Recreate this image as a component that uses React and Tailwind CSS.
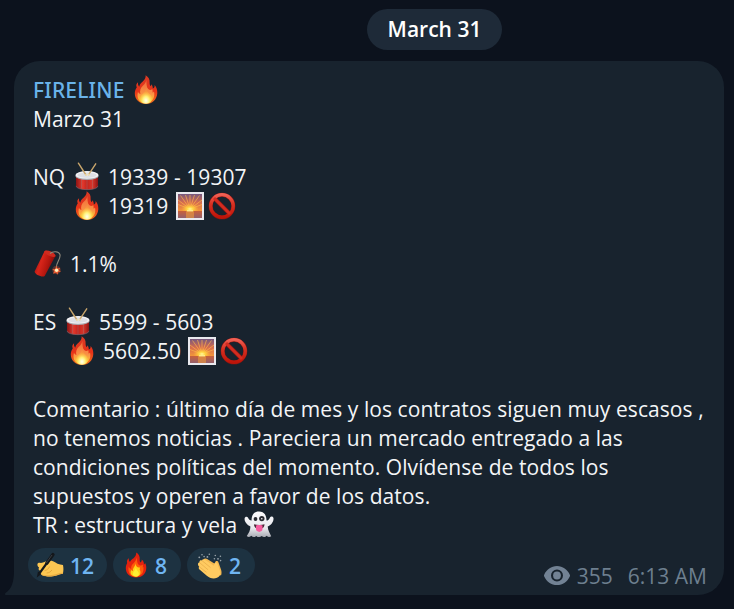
import React from "react";

function Fire({ className = "" }) {
  return (
    <svg viewBox="0 0 24 29" className={`h-[29px] w-6 shrink-0 ${className}`}>
      <defs>
        <linearGradient id="fireOuter" x1="0" y1="0" x2="0" y2="1">
          <stop offset="0" stopColor="#d93a25" />
          <stop offset="0.55" stopColor="#e63218" />
          <stop offset="1" stopColor="#f3751f" />
        </linearGradient>
        <linearGradient id="fireMid" x1="0" y1="0" x2="0" y2="1">
          <stop offset="0" stopColor="#f0683a" />
          <stop offset="0.6" stopColor="#f99245" />
          <stop offset="1" stopColor="#fcd02f" />
        </linearGradient>
        <radialGradient id="fireCore" cx="0.5" cy="0.8" r="0.6">
          <stop offset="0" stopColor="#fffef0" />
          <stop offset="0.45" stopColor="#fff27a" />
          <stop offset="1" stopColor="#fdc52f" stopOpacity="0.2" />
        </radialGradient>
      </defs>
      <path fill="url(#fireOuter)" d="M11.6.3c2.9 1.700 4.300 4.200 4 7.200 0 1.500.2 2.600 1 3.700.6-.4.700-1 .6-1.900 1.500 1.400 1.600 2.900 1.600 4.300 1.500-.7 2-2 1.800-3.600 2 2.200 2.900 5.100 2.700 8.300-.4 6.300-5.100 10.700-11.300 10.700S.800 24.700.800 18.500c0-2.500.7-4.500 2-6.300C1.600 10.500 2.500 8.500 4.100 7.200c-.5 1.800.3 3.200 1.100 4.500C5.800 8.500 8.200 7.400 9.900 5.300 11 3.900 11.900 2.300 11.600.3Z" />
      <path fill="url(#fireMid)" d="M12.300 4.700c.4 3.500-.2 7 1.900 9.400 1.600 1.300 3.100 1.200 4-.1.500 1.300.5 2.400.3 3.500.7-.1 1.200-.5 1.500-1 1.300 5.300-1.200 11.600-8.100 11.600-6.900 0-9.600-5.300-7.900-11.400.6 1.300 1.400 2.100 2.400 2.300-.8-3.100 0-6 2.400-8.300 2-1.900 3.300-3.400 3.500-6Z" />
      <path fill="url(#fireCore)" d="M12.100 13.500c.3 3 3.700 4.800 5.200 7.200 2.100 4-.5 8-5.300 8-5.200 0-7.300-4.100-5.200-7.700 1.400-2.500 4.900-4 5.300-7.500Z" />
    </svg>
  );
}

function Drum({ className = "" }) {
  return (
    <svg viewBox="0 0 24 29" className={`h-[29px] w-6 shrink-0 ${className}`}>
      <defs>
        <linearGradient id="drumBody">
          <stop offset="0" stopColor="#8c1414" />
          <stop offset="0.3" stopColor="#e3392d" />
          <stop offset="0.5" stopColor="#c2231d" />
          <stop offset="0.75" stopColor="#d8362b" />
          <stop offset="1" stopColor="#8c1414" />
        </linearGradient>
      </defs>
      <path fill="url(#drumBody)" d="M1 13v11c1 5 21 5 22 0V13Z" />
      <path fill="none" stroke="#75606a" strokeWidth=".7" d="M1 23.900c.6 5 21.400 5 22 0" />
      <path stroke="#a86a68" strokeWidth=".5" d="M6.500 17v9.500M12 18v9.500M17.500 17v9.500" />
      <ellipse cx="12" cy="13.900" rx="11.700" ry="4.200" fill="#a9aab0" />
      <ellipse cx="12" cy="12.900" rx="11.500" ry="3.900" fill="#f1f1f4" />
      <ellipse cx="12" cy="13.200" rx="9.500" ry="2.700" fill="#dedfe5" />
      <path stroke="#c9a66c" strokeWidth="1.400" strokeLinecap="round" d="M3.400 1.200 11 13M20.700 1.800 13.600 12.700" />
      <circle cx="11.100" cy="13" r="1.100" fill="#f0dfb2" />
      <circle cx="13.700" cy="12.700" r="1.100" fill="#f0dfb2" />
    </svg>
  );
}

function Sunrise({ className = "" }) {
  return (
    <svg viewBox="0 0 28 28" className={`h-7 w-7 shrink-0 ${className}`}>
      <defs>
        <linearGradient id="sunSky" x1="0" y1="0" x2="0" y2="1">
          <stop offset="0" stopColor="#75587f" />
          <stop offset="0.5" stopColor="#d66b4e" />
          <stop offset="1" stopColor="#f3963a" />
        </linearGradient>
        <linearGradient id="sunSea" x1="0" y1="0" x2="0" y2="1">
          <stop offset="0" stopColor="#c9603a" />
          <stop offset="1" stopColor="#94606c" />
        </linearGradient>
        <radialGradient id="sunGlow">
          <stop offset="0" stopColor="#fff6a0" />
          <stop offset="0.35" stopColor="#ffd541" />
          <stop offset="1" stopColor="#ffad38" stopOpacity="0" />
        </radialGradient>
      </defs>
      <path fill="#e9e9ee" d="M0 0h28v28H0z" />
      <path fill="url(#sunSky)" d="M2 2h24v17H2z" />
      <path stroke="#ffb94b" strokeWidth="1" opacity=".65" d="M14 17 14 3M14 17 9.500 3M14 17 18.500 3M14 17 4.500 3.500M14 17 23.500 3.500M14 17 2 8M14 17 26 8M14 17 2 12.500M14 17 26 12.500" />
      <ellipse cx="14" cy="17" rx="9" ry="5.500" fill="url(#sunGlow)" />
      <path fill="url(#sunSea)" d="M2 19h24v7H2z" />
      <path fill="#e8963f" opacity=".65" d="M10 19h8v7h-8z" />
      <path stroke="#fff09a" strokeWidth="1.200" d="M11 18.800h6" />
    </svg>
  );
}

function Prohibited({ className = "" }) {
  return (
    <svg viewBox="0 0 28 28" className={`h-7 w-7 shrink-0 ${className}`}>
      <defs>
        <linearGradient id="banRed" x1="0" y1="0" x2="0" y2="1">
          <stop offset="0" stopColor="#f06054" />
          <stop offset="0.4" stopColor="#d83223" />
          <stop offset="1" stopColor="#bd1409" />
        </linearGradient>
      </defs>
      <circle cx="14" cy="14" r="11.300" fill="none" stroke="#8f1610" strokeWidth="4" />
      <path stroke="#8f1610" strokeWidth="4" d="m6 6 16 16" />
      <circle cx="14" cy="14" r="11.300" fill="none" stroke="url(#banRed)" strokeWidth="3.200" />
      <path stroke="#d32c20" strokeWidth="3" d="m6 6 16 16" />
    </svg>
  );
}

function Dynamite({ className = "" }) {
  return (
    <svg viewBox="0 0 29 29" className={`h-[29px] w-[29px] shrink-0 ${className}`}>
      <defs>
        <linearGradient id="stick" x1="0" y1="0.2" x2="1" y2="0.6">
          <stop offset="0" stopColor="#8f0e0b" />
          <stop offset="0.35" stopColor="#d8251a" />
          <stop offset="0.65" stopColor="#b5170f" />
          <stop offset="1" stopColor="#6d0807" />
        </linearGradient>
      </defs>
      <path fill="url(#stick)" d="M11.500 2.200 1.700 22.300c-.8 2.500 7.500 6.500 10 4.600L22.300 7.200C22.500 4.500 13.500.5 11.500 2.200Z" />
      <ellipse cx="17" cy="4.700" rx="6" ry="2.300" transform="rotate(24 17 4.700)" fill="#cf2b1f" />
      <path fill="none" stroke="#8f897b" strokeWidth="1.100" d="M17 4.500c2.700-2.600 9-2.500 10 1.200 1 3.600-4 8-3.700 13" />
      <circle cx="23.500" cy="21" r="4.300" fill="#d74f2b" opacity=".35" />
      <path fill="#e65c33" d="m23.500 17 1 2.500 2.700-.7-1.200 2.500 1.900 1.300-2.800.6-.4 2.500-1.700-2-3 1 1.200-2.700-1.900-1.700 2.800-.2Z" />
      <circle cx="23.600" cy="21.200" r="1.700" fill="#fff0bc" />
    </svg>
  );
}

function Ghost({ className = "" }) {
  return (
    <svg viewBox="0 0 30 27" className={`h-[27px] w-[30px] shrink-0 ${className}`}>
      <defs>
        <linearGradient id="ghostBody" x1="0" y1="0" x2="0" y2="1">
          <stop offset="0" stopColor="#fbfbfd" />
          <stop offset="0.65" stopColor="#e8e8ed" />
          <stop offset="1" stopColor="#a9abb3" />
        </linearGradient>
      </defs>
      <path fill="url(#ghostBody)" d="M15 .6c5.800 0 7.500 4.400 7.500 9 1.700-.1 2.700-1.100 3.500-3.200.8-1.500 3.300-1.100 3.500.9.300 3.600-2.500 7-5.800 8.200.2 3.900 2.200 6.600 3.500 9.700-1.700 1.300-3.300.8-4.500-.5-1.300 1.700-3.600 1.900-4.900.3-1.700 1.500-3.900 1.500-5.500-.1-1.600 1.600-3.700 1.500-4.900-.1-1.300 1.400-3.400 1.500-4.600.1 2-3 3.700-5.600 3.600-9.500C3.100 14 .300 10.700.600 7.500.8 5.600 3 5 3.900 6.500c.9 1.900 1.900 2.900 3.700 3.100 0-4.800 1.800-9 7.400-9Z" />
      <circle cx="11.500" cy="8" r="1.900" fill="#292a31" />
      <circle cx="17.800" cy="7.600" r="2.700" fill="#292a31" />
      <circle cx="17.800" cy="7.700" r=".8" fill="#f5f5f8" />
      <path fill="#4a2536" d="M10 13.300c3 1 7.500 1 10.500 0 0 3.200-2.200 4.700-5.200 4.700s-5.300-1.500-5.300-4.700Z" />
      <path fill="#f45c9e" d="M12 14.400c1.800-.4 4.700-.4 6.500 0v3.700c0 3.700-6.500 3.700-6.500 0Z" />
    </svg>
  );
}

function Writing({ className = "" }) {
  return (
    <svg viewBox="0 0 28 26" className={`h-[26px] w-7 shrink-0 ${className}`}>
      <path fill="#fdc752" d="M1.400 12.600C1.300 11 3 10.600 4.800 11c3.200-.3 5.200-2.200 8.400-2.400 2.800-.2 5.600 1.700 8.300 3.200 1.800.7 3.700.9 5.500 1.200.6 2.900.6 5.800-.1 8.800-4.300.3-7 2.600-11.800 2.600-4.500 0-8.900-.3-10.500-2.500-.9-1.200-.6-2.400.5-3.100-2.300-.2-3.200-1.700-2-3.300-1.100-.5-1.700-1.600-1.700-2.900Z" />
      <path fill="#e8ab42" d="M5.200 22.200c3.200 1.300 7.300 1.400 10.600.8 3.900-.7 6.700-2.300 11.200-2.300l-.1 1.100c-4.300.3-7 2.600-11.800 2.600-4.500 0-8.400-.1-9.900-2.200Z" />
      <path fill="none" stroke="#dfa036" strokeWidth=".8" strokeLinecap="round" d="M9 18.500c2.200-.3 3.500-1.700 4.500-3.700M11 21c2.200-.2 3.800-1.200 4.700-2.700" />
      <path stroke="#14171b" strokeWidth="3.300" strokeLinecap="round" d="M17 2.500 10.800 11.300" />
      <path stroke="#14171b" strokeWidth="2.300" d="M11.400 10.400 3.600 21.200" />
      <path fill="#14171b" d="M2 19.600 5.400 22 .8 25.500Z" />
      <path stroke="#4a4e52" strokeWidth=".7" d="M16 3 10.300 11" />
    </svg>
  );
}

function FlatFire({ className = "" }) {
  return (
    <svg viewBox="0 0 22 26" className={`h-[26px] w-[22px] shrink-0 ${className}`}>
      <path fill="#e3220f" d="M11.200.5c2.700 1.600 3.800 4.100 3.500 6.900-.1 1.300.2 2.200.9 3 1-.8 1.300-1.700 1.100-2.800 2.100 1.700 2.200 3.400 2.300 4.800.7-.4 1-.9 1.100-1.500 1.200 1.900 1.300 4 1.100 6-.6 5.400-4.500 8.500-10.200 8.500S.900 22 .8 16.200c0-2 .5-3.800 1.400-5.300-.8-2 .3-3.700 1.600-4.700-.2 1.600.4 2.900 1.200 3.900.7-3.100 6.800-4.200 6.200-9.600Z" />
      <path fill="#ff5a0a" d="M11.700 5.200c.6 3.600.1 5.600 2.300 7.900 1.800 1 3.100.3 3.900-.5.1 1.300 0 2.200-.3 3l.8-.5c.7 5-1.500 9.500-7.600 9.500-6.200 0-8.300-5-7-10 .5 1.400 1.300 2.200 2.400 2.300-.6-5.800 5-5.700 5.500-11.700Z" />
      <path fill="#ffd21a" d="M10.700 11.200c-.2 4 3 5 4.100 4 .1 1 .1 1.500-.2 2.200 2.200 3.300.2 7.300-3.800 7.300-4.400 0-6.200-3.700-4.600-6.700.6.600 1.200.9 1.800.9-.5-3.200 2.400-4.600 2.700-7.700Z" />
      <path fill="#fff033" d="M10.900 15.800c.4 2.600 3.100 3.700 3 6.100-.1 3.500-6 3.300-6-.1 0-2 2.600-3.300 3-6Z" />
    </svg>
  );
}

function Clap({ className = "" }) {
  return (
    <svg viewBox="0 0 26 27" className={`h-[27px] w-[26px] shrink-0 ${className}`}>
      <path fill="#f3b850" d="M6.500 8c.7-1.500 2.200-1.900 3.600-.9l7.300 4.500c.7.200.9-.2.800-1-.1-2 2.600-2.300 3.300-.2l2.500 7c.7 2.100.7 4 .1 5.800l-9 .8Z" />
      <path fill="#ffcb61" d="M1 12.400c-.2-1.200.5-2 1.500-2-.4-1.600.9-2.700 2.400-2 .5-1.300 2.200-1.500 3.500-.5l7.700 5.400c.8.500 1.300 0 1.200-1-.2-2.300 2.500-2.500 3.200-.4l2.300 6.600c1.200 3.400.1 6.200-2.800 7.300-3.700 1.400-7.300.4-10.500-2.400L2.800 17.700c-1.200-1-1.400-2-.6-3-.7-.6-1.100-1.400-1.200-2.300Z" />
      <path fill="none" stroke="#e5a948" strokeWidth=".7" strokeLinecap="round" d="m2.900 10.900 7.900 6.700M5.300 8.900l7.900 6.400M2.500 14.900l6.700 5.200" />
      <g fill="#9aa4aa">
        <circle cx="2.300" cy="5.300" r=".9" />
        <circle cx="5" cy="2.800" r=".8" />
        <circle cx="7.100" cy="4.600" r=".8" />
        <circle cx="10.400" cy="4.900" r=".9" />
        <circle cx="12.300" cy="2.300" r=".8" />
        <circle cx="17.400" cy="6.800" r=".8" />
        <circle cx="18.300" cy="3.500" r=".8" />
        <circle cx="21" cy="6.800" r=".9" />
        <circle cx="23.400" cy="4.200" r=".8" />
        <circle cx="23.600" cy="8.600" r=".8" />
      </g>
    </svg>
  );
}

function Eye() {
  return (
    <svg viewBox="0 0 26 19" className="h-[19px] w-[26px] shrink-0">
      <path fill="#728294" fillRule="evenodd" d="M13 0C7.200 0 2.500 3.500.2 8.700c-.3.600-.3 1.100 0 1.700C2.500 15.600 7.200 19 13 19s10.500-3.400 12.800-8.600c.3-.6.300-1.100 0-1.700C23.500 3.500 18.800 0 13 0Zm0 3.500a6 6 0 1 1 0 12 6 6 0 0 1 0-12Z" />
      <circle cx="13" cy="9.500" r="3.900" fill="#728294" />
    </svg>
  );
}

function Row({ children }) {
  return <div className="flex h-[29px] items-center whitespace-pre">{children}</div>;
}

function Text({ className = "", children }) {
  return <span className={`pt-[2px] ${className}`}>{children}</span>;
}

export default function App() {
  return (
    <main className="flex h-[609px] w-[734px] flex-col overflow-hidden bg-[#0c121d] font-['Open_Sans','Noto_Sans',sans-serif] text-[21px] leading-[29px] text-[#f3f5f7]">
      <div className="ml-[367px] mt-[9px] flex h-[41px] w-[135px] shrink-0 items-center justify-center rounded-full bg-[#1e2a38] font-semibold text-white">
        <span className="pb-px text-[21px]">March 31</span>
      </div>
      <section className="relative ml-[14px] mt-[11px] flex h-[534px] w-[710px] shrink-0 flex-col rounded-[26px] rounded-bl-none bg-[#18232e] pl-[19px] pt-[14px]">
        <svg viewBox="0 0 10 24" className="absolute bottom-0 -left-[9px] h-6 w-[10px]">
          <path fill="#18232e" d="M10 0H9c0 10-2 18-8.500 22-.8.600-.5 2 .5 2h9Z" />
        </svg>
        <Row>
          <Text className="w-[101px] font-['Noto_Sans',sans-serif] font-medium tracking-[0.18px] text-[#6ab3ea]">FIRELINE</Text>
          <Fire />
        </Row>
        <Row><Text>Marzo 31</Text></Row>
        <Row />
        <Row>
          <Text className="w-[42px]">NQ</Text>
          <Drum />
          <Text className="ml-[9px] tracking-[0.07px]">19339 - 19307</Text>
        </Row>
        <Row>
          <Fire className="ml-[42px]" />
          <Text className="ml-[9px] w-[68px] tracking-[0.07px]">19319</Text>
          <Sunrise />
          <Prohibited className="ml-[4px]" />
        </Row>
        <Row />
        <Row>
          <Dynamite />
          <Text className="ml-[8px]">1.1%</Text>
        </Row>
        <Row />
        <Row>
          <Text className="w-[33px]">ES</Text>
          <Drum />
          <Text className="ml-[9px] tracking-[0.07px]">5599 - 5603</Text>
        </Row>
        <Row>
          <Fire className="ml-[37px]" />
          <Text className="ml-[9px] w-[85px] tracking-[0.07px]">5602.50</Text>
          <Sunrise />
          <Prohibited className="ml-[4px]" />
        </Row>
        <Row />
        <Row><Text className="tracking-[0.07px]">Comentario : último día de mes y los contratos siguen muy escasos ,</Text></Row>
        <Row><Text className="tracking-[0.065px]">no tenemos noticias . Pareciera un mercado entregado a las</Text></Row>
        <Row><Text className="tracking-[0.065px]">condiciones políticas del momento. Olvídense de todos los</Text></Row>
        <Row><Text className="tracking-[0.065px]">supuestos y operen a favor de los datos.</Text></Row>
        <Row>
          <Text className="w-[211px] tracking-[0.05px]">TR : estructura y vela</Text>
          <Ghost />
        </Row>
        <footer className="-ml-[5px] mt-[9px] flex h-[34px] items-start">
          <div className="flex gap-[6px] font-semibold text-[#6fb5f2]">
            <div className="flex h-[34px] w-[79px] items-center rounded-full bg-[#1d3241] pl-2">
              <Writing />
              <Text className="ml-[6px]">12</Text>
            </div>
            <div className="flex h-[34px] w-[68px] items-center rounded-full bg-[#1d3241] pl-3">
              <FlatFire />
              <Text className="ml-[8px]">8</Text>
            </div>
            <div className="flex h-[34px] w-[68px] items-center rounded-full bg-[#1d3241] pl-[10px]">
              <Clap />
              <Text className="ml-[6px]">2</Text>
            </div>
          </div>
          <div className="ml-auto mr-[17px] mt-[12px] flex items-center text-[#6d7f8f]">
            <Eye />
            <Text className="ml-[7px] w-[51px]">355</Text>
            <Text className="whitespace-nowrap">6:13 AM</Text>
          </div>
        </footer>
      </section>
    </main>
  );
}
